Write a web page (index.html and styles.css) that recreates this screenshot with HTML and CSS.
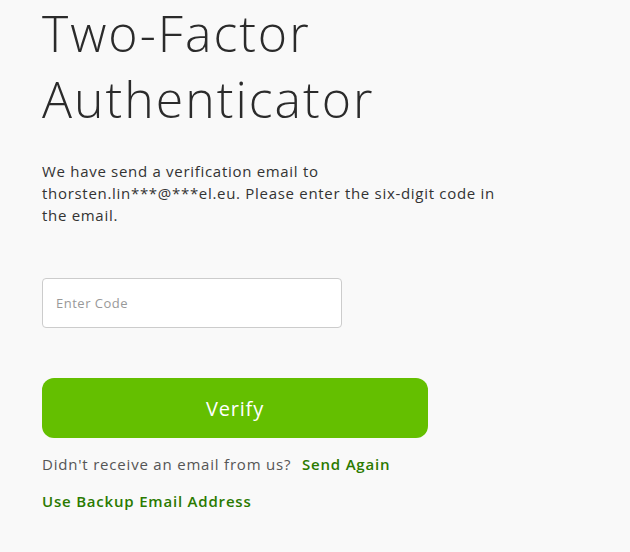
FILE: index.html
```html
<!DOCTYPE html>
<html lang="en">
<head>
    <meta charset="UTF-8">
    <meta name="viewport" content="width=device-width, initial-scale=1.0">
    <title>Two-Factor Authenticator</title>
    <link rel="stylesheet" href="styles.css">
</head>
<body>
    <main class="auth">
        <h1 class="auth-title">Two-Factor Authenticator</h1>

        <p class="auth-text">
            We have send a verification email to
            thorsten.lin***@***el.eu. Please enter the six-digit code in the email.
        </p>

        <input type="text" class="code-input" placeholder="Enter Code">

        <button class="verify-btn">Verify</button>

        <p class="resend">
            Didn't receive an email from us?
            <a href="#" class="link">Send Again</a>
        </p>

        <a href="#" class="link backup">Use Backup Email Address</a>
    </main>
</body>
</html>
```

FILE: styles.css
```css
/* page */
body {
    margin: 0;
    padding: 0;
    background: #f9f9f9;
    font-family: 'Open Sans', 'Noto Sans', sans-serif;
    color: #333;
}

.auth {
    padding: 0 42px;
    display: flex;
    flex-direction: column;
    align-items: flex-start;
}

.auth-title {
    margin: 0;
    width: 420px;
    font-size: 50px;
    font-weight: 300;
    letter-spacing: 2px;
    line-height: 66px;
    color: #2b2b2b;
}

.auth-text {
    margin: 28px 0 0;
    width: 465px;
    font-size: 15px;
    letter-spacing: 0.7px;
    line-height: 22px;
    color: #333;
}

.code-input {
    margin-top: 52px;
    box-sizing: border-box;
    width: 300px;
    height: 50px;
    padding: 0 13px;
    border: 1px solid #ccc;
    border-radius: 4px;
    background: #fff;
    font-family: inherit;
    font-size: 13px;
    letter-spacing: 0.5px;
}

.code-input::placeholder {
    color: #999;
}

.verify-btn {
    margin-top: 50px;
    width: 386px;
    height: 60px;
    border: none;
    border-radius: 12px;
    background: #64bf00;
    color: #fff;
    font-family: inherit;
    font-size: 20px;
    letter-spacing: 0.8px;
    cursor: pointer;
}

.resend {
    margin: 16px 0 0;
    font-size: 15px;
    letter-spacing: 0.8px;
    line-height: 20px;
    color: #555;
}

.link {
    margin-left: 6px;
    color: #2a7a00;
    font-weight: 600;
    text-decoration: none;
}

.backup {
    margin: 17px 0 0;
    font-size: 15px;
    letter-spacing: 0.8px;
    line-height: 20px;
}
```
